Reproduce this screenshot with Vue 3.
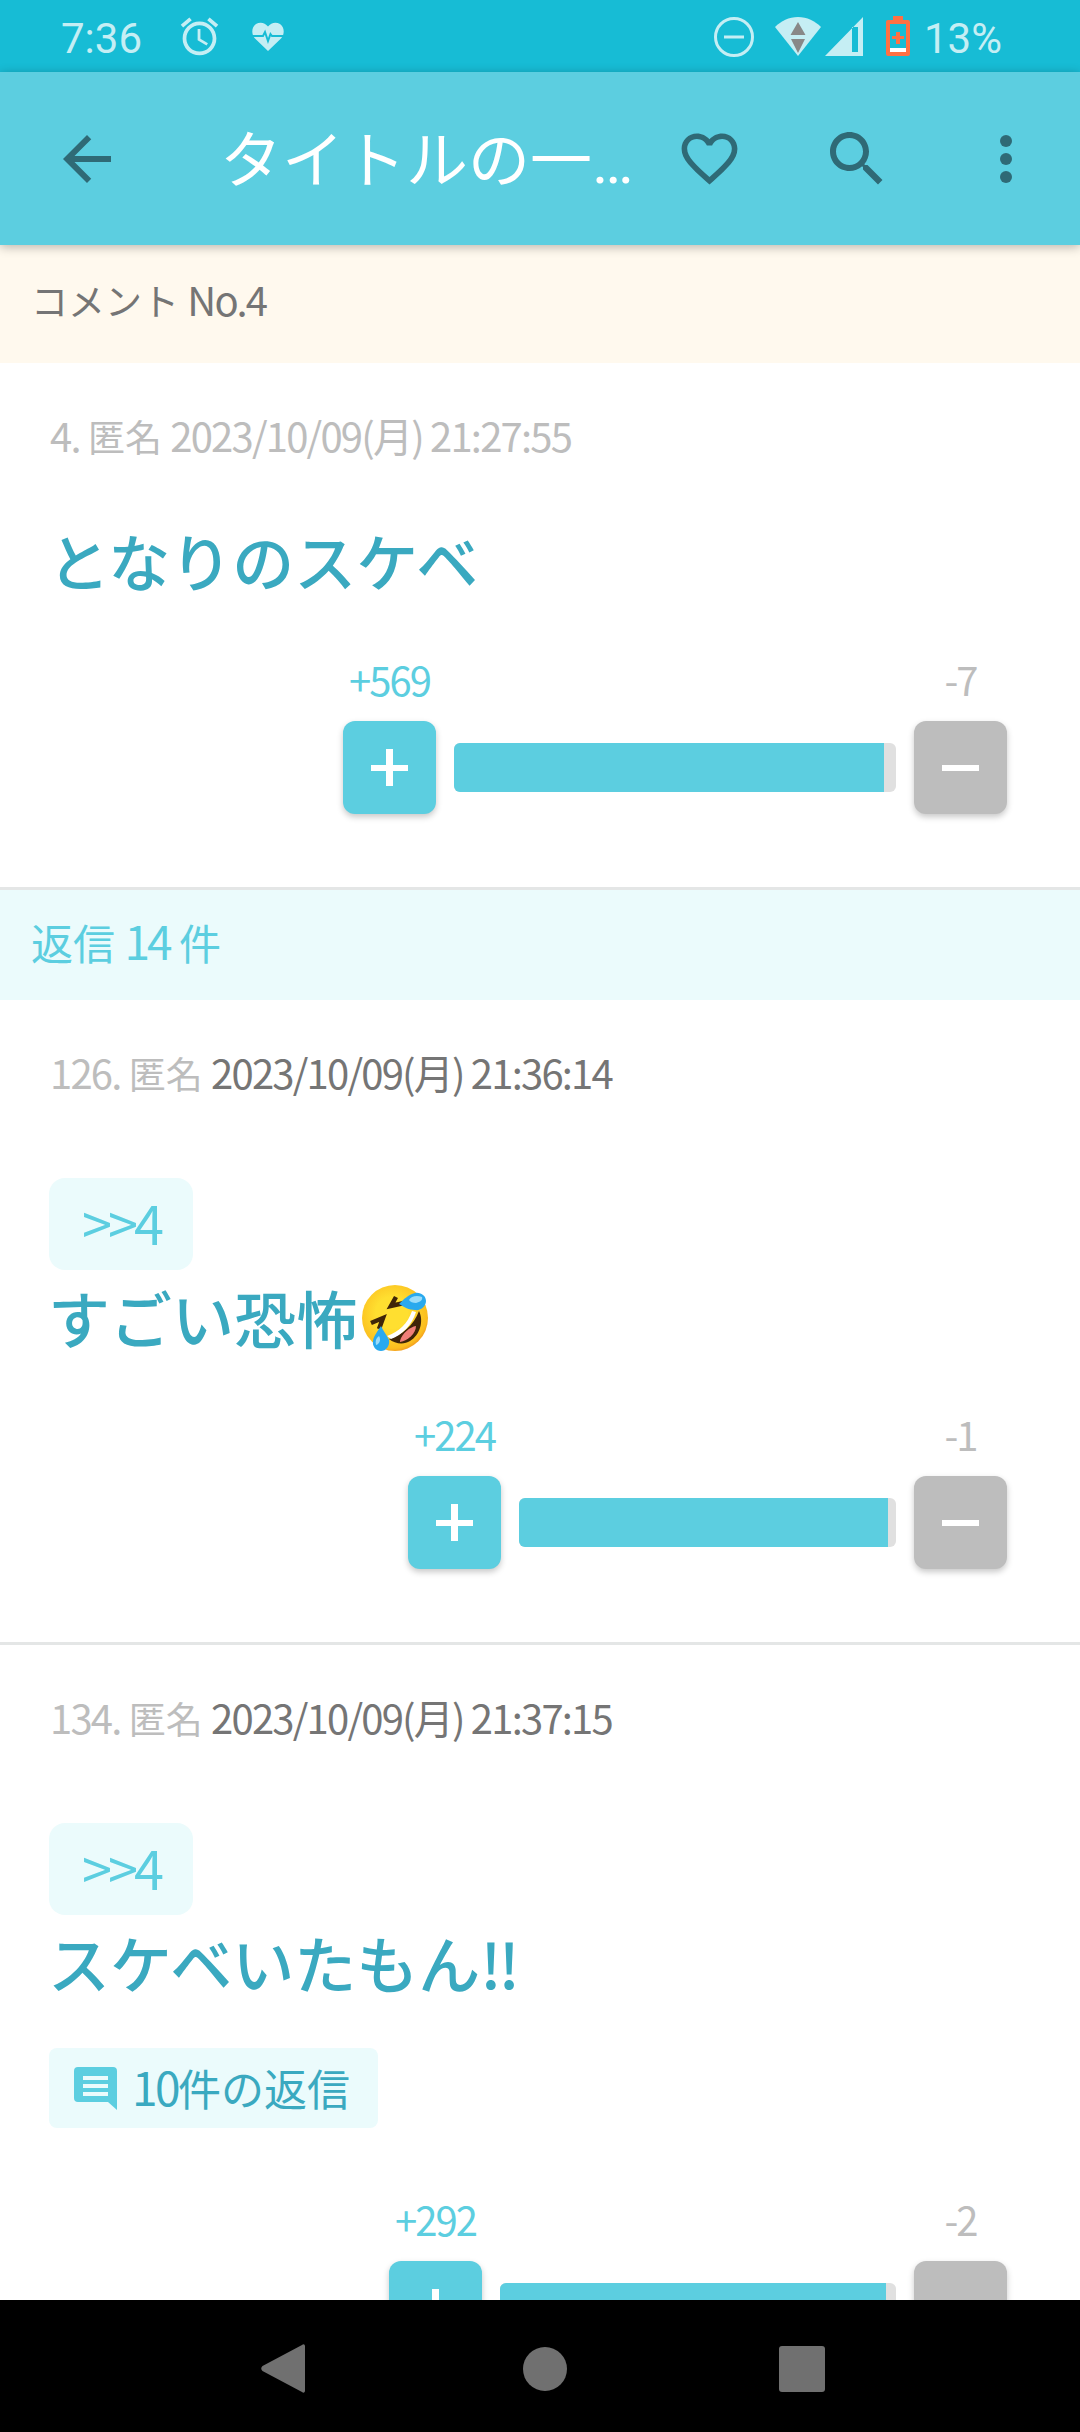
<template>
  <div class="screen">
    <div class="status">
      <span class="clock">7:36</span>
      <svg class="alarm" viewBox="0 0 24 24"><path d="M22 5.72l-4.6-3.86-1.29 1.53 4.6 3.86L22 5.72zM7.88 3.39L6.6 1.86 2 5.71l1.29 1.53 4.59-3.85zM12.5 8H11v6l4.75 2.85.75-1.23-4-2.37V8zM12 4c-4.97 0-9 4.03-9 9s4.02 9 9 9c4.97 0 9-4.03 9-9s-4.03-9-9-9zm0 16c-3.87 0-7-3.13-7-7s3.13-7 7-7 7 3.13 7 7-3.13 7-7 7z"/></svg>
      <svg class="pulse" viewBox="0 0 32 29">
        <path d="M16 29 3 16.5C-1 12-.5 5 4 2c4-2.500 9-1.500 12 2.500C19 .5 24-.5 28 2c4.500 3 5 10 1 14.500z"/>
        <path class="pulse-line" d="M0 14h11l2-4 3 9 2.500-7 1.500 2h12"/>
      </svg>
      <span class="spacer"></span>
      <svg class="dnd" viewBox="0 0 40 40"><circle cx="20" cy="20" r="18.500"/><path d="M10 20h20"/></svg>
      <svg class="wifi" viewBox="0 0 46 39">
        <path class="wifi-fan" d="M0 10C6 4 14 0 23 0s17 4 23 10L23 39z"/>
        <path class="wifi-arrow" d="M23 5l7.500 13h-15zM16 22h14l-7 14z"/>
      </svg>
      <svg class="signal" viewBox="0 0 38 39">
        <path class="signal-fill" fill-rule="evenodd" d="M38 0v39H0zM27 10v25h6V10z"/>
      </svg>
      <svg class="battery" viewBox="0 0 24 40">
        <path class="battery-shell" fill-rule="evenodd" d="M7 0h10v4h5a2 2 0 0 1 2 2v32a2 2 0 0 1-2 2H2a2 2 0 0 1-2-2V6a2 2 0 0 1 2-2h5zM4 8v28h16V8z"/>
        <rect class="battery-level" x="4" y="32" width="16" height="4"/>
        <path class="battery-shell" d="M10 16h4v4h4v3h-4v5h-4v-5H6v-3h4z"/>
      </svg>
      <span class="percent">13%</span>
    </div>

    <header class="appbar">
      <svg class="bar-icon back" viewBox="0 0 24 24"><path d="M20 11H7.830l5.590-5.590L12 4l-8 8 8 8 1.410-1.410L7.830 13H20v-2z"/></svg>
      <h1 class="page-title">タイトルの一<span class="dots">…</span></h1>
      <svg class="bar-icon heart" viewBox="0 0 24 24"><path d="M16.500 3c-1.740 0-3.410.81-4.500 2.090C10.910 3.810 9.240 3 7.500 3 4.420 3 2 5.420 2 8.500c0 3.780 3.400 6.860 8.550 11.540L12 21.350l1.450-1.320C18.600 15.360 22 12.280 22 8.500 22 5.420 19.580 3 16.500 3zm-4.400 15.550l-.1.100-.1-.1C7.140 14.240 4 11.390 4 8.500 4 6.500 5.500 5 7.500 5c1.540 0 3.040.99 3.570 2.360h1.870C13.460 5.990 14.960 5 16.500 5c2 0 3.500 1.500 3.500 3.500 0 2.890-3.140 5.740-7.900 10.050z"/></svg>
      <svg class="bar-icon search" viewBox="0 0 24 24"><path d="M15.500 14h-.79l-.28-.27C15.410 12.590 16 11.110 16 9.500 16 5.910 13.090 3 9.500 3S3 5.910 3 9.500 5.910 16 9.500 16c1.610 0 3.090-.59 4.230-1.570l.27.28v.79l5 4.990L20.490 19l-4.990-5zm-6 0C7.010 14 5 11.990 5 9.500S7.010 5 9.500 5 14 7.010 14 9.500 11.990 14 9.500 14z"/></svg>
      <svg class="bar-icon more" viewBox="0 0 24 24"><circle cx="12" cy="6" r="2"/><circle cx="12" cy="12" r="2"/><circle cx="12" cy="18" r="2"/></svg>
    </header>

    <main class="content">
      <div class="section-head comment-head">コメント <span class="num">No.4</span></div>

      <template v-for="(c, i) in comments" :key="c.no">
        <div v-if="i === 1" class="section-head reply-head">返信 <span class="num-lg">14</span> 件</div>
        <article class="item">
          <div class="meta"><span class="num">{{ c.no }}.</span> 匿名 <span class="num" :class="{ fresh: c.fresh }">{{ c.date }}</span></div>
          <div class="body">
            <div v-if="c.anchor" class="anchor">{{ c.anchor }}</div>
            <p class="text" :class="{ 'after-anchor': c.anchor }">
              {{ c.text }}<span v-if="c.bang" class="bang">{{ c.bang }}</span>
              <svg v-if="c.emoji" class="emoji" viewBox="0 0 66 66">
                <defs>
                  <radialGradient id="face" cx="0.45" cy="0.42" r="0.6">
                    <stop offset="0.4" stop-color="#ffdf30"/>
                    <stop offset="0.9" stop-color="#fbbd1f"/>
                    <stop offset="1" stop-color="#f29a1e"/>
                  </radialGradient>
                </defs>
                <circle cx="33" cy="33" r="33" fill="url(#face)"/>
                <path d="M27 54C40 50 52 40 57 26c5 10 1 24-9 30-6 4-15 3-21-2z" fill="#3f2508"/>
                <path d="M25 51C37 47 46 38 50 26l4 1C50 40 40 50 29 54z" fill="#fff"/>
                <path d="M38 56c2-8 10-14 16-15 0 7-8 15-16 16z" fill="#ef7f78"/>
                <path d="M34 12l-5 9 13-3M9 38l12-5-4 11" fill="none" stroke="#3f2508" stroke-width="4.500"/>
                <path d="M37 19c5-5 9-9 16-11 6-1 11 3 11 8s-5 10-11 9c-6 0-11-3-16-6z" fill="#29a9ee"/>
                <path d="M47 15c2-4 8-5 13-3 1 3-2 5-6 6-3 0-6-1-7-3z" fill="#9adcfa"/>
                <path d="M19 41c2 5 6 9 8 14 1 6-3 11-8 11s-9-5-8-10c1-6 5-10 8-15z" fill="#29a9ee"/>
                <path d="M14 60c-1-4 0-7 3-9 2 3 1 8-3 9z" fill="#9adcfa"/>
              </svg>
            </p>
            <div v-if="c.replies" class="replies">
              <svg class="replies-icon" viewBox="0 0 43 43"><path fill-rule="evenodd" d="M4 0h35a4 4 0 0 1 4 4v39L34 35H4a4 4 0 0 1-4-4V4a4 4 0 0 1 4-4zM9 9v4h25V9zM9 17v4h25v-4zM9 25v4h25v-4z"/></svg>
              <span><span class="reply-num">{{ c.replies }}</span>件の返信</span>
            </div>
          </div>
          <div class="votes" :class="{ 'after-replies': c.replies }">
            <div class="vote-row" :style="{ width: c.width + 'px' }">
              <div class="vote-side">
                <span class="count up">+{{ c.up }}</span>
                <div class="btn btn-up"><span class="plus"></span></div>
              </div>
              <div class="track"><div class="track-fill" :style="{ width: c.fill + 'px' }"></div></div>
              <div class="vote-side">
                <span class="count down">-{{ c.down }}</span>
                <div class="btn btn-down"><span class="minus"></span></div>
              </div>
            </div>
          </div>
        </article>
      </template>
    </main>

    <nav class="navbar">
      <svg class="nav-back" viewBox="0 0 44 49"><path d="M1.500 27a3.500 3.500 0 0 1 0-5L41 1c1.500-1.500 3-.5 3 1.500v44c0 2-1.500 3-3 1.500z"/></svg>
      <span class="nav-home"></span>
      <span class="nav-recent"></span>
    </nav>
  </div>
</template>

<script setup>
const comments = [
  { no: 4, date: '2023/10/09(月) 21:27:55', text: 'となりのスケベ', up: 569, down: 7, width: 664, fill: 430 },
  { no: 126, date: '2023/10/09(月) 21:36:14', fresh: true, anchor: '>>4', text: 'すごい恐怖', emoji: true, up: 224, down: 1, width: 599, fill: 369 },
  { no: 134, date: '2023/10/09(月) 21:37:15', fresh: true, anchor: '>>4', text: 'スケベいたもん', bang: '!!', replies: 10, up: 292, down: 2, width: 618, fill: 386 }
]
</script>

<style>
html, body {
  margin: 0;
  background: #fff;
}
</style>

<style scoped>
.screen {
  width: 1080px;
  height: 2432px;
  display: flex;
  flex-direction: column;
  overflow: hidden;
  background: #fff;
  font-family: "Noto Sans CJK JP", "Noto Sans", sans-serif;
}

/* status bar */
.status {
  height: 72px;
  flex: none;
  display: flex;
  align-items: center;
  background: #17bcd5;
  color: #c5eef4;
  font-family: Roboto, sans-serif;
  font-size: 42px;
}
.clock {
  margin-left: 61px;
  margin-top: 5px;
  width: 82px;
}
.alarm {
  width: 45px;
  height: 45px;
  margin-left: 34px;
  fill: #c5eef4;
}
.pulse {
  width: 32px;
  height: 29px;
  margin-left: 30px;
  fill: #c5eef4;
}
.pulse-line {
  fill: none;
  stroke: #17bcd5;
  stroke-width: 2;
}
.spacer {
  flex: 1;
}
.dnd {
  width: 40px;
  height: 40px;
  margin-top: 2px;
  fill: none;
  stroke: #c5eef4;
  stroke-width: 3;
}
.wifi {
  width: 46px;
  height: 39px;
  margin-left: 21px;
}
.wifi-fan {
  fill: #c5eef4;
}
.wifi-arrow {
  fill: #888;
}
.signal {
  width: 38px;
  height: 39px;
  margin-left: 4px;
}
.signal-fill {
  fill: #c5eef4;
}
.battery {
  width: 24px;
  height: 40px;
  margin-left: 23px;
}
.battery-shell {
  fill: #ff7043;
}
.battery-level {
  fill: #fff;
}
.percent {
  width: 78px;
  margin-left: 14px;
  margin-right: 78px;
  margin-top: 5px;
}

/* app bar */
.appbar {
  height: 173px;
  flex: none;
  display: flex;
  align-items: center;
  background: #5ccee0;
  box-shadow: 0 2px 10px rgba(0, 0, 0, 0.28);
  position: relative;
  z-index: 1;
}
.bar-icon {
  flex: none;
  fill: #2f6a76;
}
.back {
  width: 72px;
  height: 72px;
  margin-left: 51px;
}
.page-title {
  width: 553px;
  margin: 0 0 0 97px;
  color: #fff;
  font-size: 62px;
  font-weight: 400;
  line-height: 80px;
  white-space: nowrap;
}
.dots {
  font-family: Roboto, sans-serif;
}
.heart {
  width: 67px;
  height: 67px;
  margin-left: -97px;
}
.search {
  width: 72px;
  height: 72px;
  margin-left: 78px;
}
.more {
  width: 72px;
  height: 72px;
  margin-left: 77px;
}

/* list */
.content {
  flex: 1;
  min-height: 0;
  overflow: hidden;
}
.section-head {
  padding-left: 31px;
}
.comment-head {
  height: 118px;
  background: #fff9ee;
  color: #757575;
  font-size: 37px;
  line-height: 108px;
}
.reply-head {
  height: 110px;
  background: #ebfbfc;
  color: #5ccee0;
  font-size: 42px;
  line-height: 101px;
}
.num {
  font-size: 40px;
  letter-spacing: -1.8px;
}
.num-lg {
  font-size: 46px;
  letter-spacing: -3px;
}
.item {
  padding: 50px 0 73px;
  border-bottom: 3px solid #e4e6e6;
}
.meta {
  height: 50px;
  padding-left: 50px;
  color: #bdbdbd;
  font-size: 37px;
  line-height: 44px;
}
.fresh {
  color: #757575;
}
.body {
  display: flow-root;
  margin-top: 60px;
  padding: 0 50px 0 49px;
}
.anchor {
  width: 144px;
  height: 92px;
  box-sizing: border-box;
  margin-top: 18px;
  padding-bottom: 6px;
  display: flex;
  align-items: center;
  justify-content: center;
  border-radius: 16px;
  background: #ebfbfc;
  color: #5ccee0;
  font-size: 54px;
  letter-spacing: -4px;
}
.text {
  margin: 0 0 0 -1px;
  height: 80px;
  display: flex;
  align-items: flex-start;
  color: #3aa9c0;
  font-size: 62px;
  font-weight: 500;
  line-height: 74px;
}
.text.after-anchor {
  margin-top: 10px;
  height: 78px;
}
.bang {
  letter-spacing: -3px;
}
.emoji {
  flex: none;
  width: 66px;
  height: 66px;
  margin: 5px 0 0 4px;
}
.replies {
  width: 329px;
  height: 80px;
  box-sizing: border-box;
  margin-top: 45px;
  padding: 0 0 4px 25px;
  display: flex;
  align-items: center;
  border-radius: 8px;
  background: #ebfbfc;
  color: #3aa9c0;
  font-size: 43px;
}
.reply-num {
  font-size: 46px;
  letter-spacing: -2.500px;
}
.replies-icon {
  width: 43px;
  height: 43px;
  margin: 4px 15px 0 0;
  fill: #5ccee0;
}
.votes {
  margin-top: 57px;
  padding-right: 73px;
  display: flex;
  justify-content: flex-end;
}
.votes.after-replies {
  margin-top: 72px;
}
.vote-row {
  display: flex;
  align-items: flex-end;
  gap: 18px;
}
.vote-side {
  flex: none;
  width: 93px;
  display: flex;
  flex-direction: column;
  align-items: center;
}
.count {
  height: 44px;
  font-size: 40px;
  letter-spacing: -2px;
  line-height: 38px;
  margin-bottom: 17px;
  white-space: nowrap;
}
.up {
  color: #5ccee0;
}
.down {
  color: #bdbdbd;
}
.btn {
  width: 93px;
  height: 93px;
  display: flex;
  align-items: center;
  justify-content: center;
  border-radius: 12px;
  box-shadow: 0 3px 6px rgba(0, 0, 0, 0.22);
}
.btn-up {
  background: #5ccee0;
}
.btn-down {
  background: #bdbdbd;
}
.plus,
.minus {
  width: 37px;
  height: 6px;
  background: #fff;
  position: relative;
}
.plus::after {
  content: "";
  position: absolute;
  left: 15px;
  top: -15.500px;
  width: 7px;
  height: 37px;
  background: #fff;
}
.track {
  flex: 1;
  height: 49px;
  margin-bottom: 22px;
  border-radius: 6px;
  overflow: hidden;
  background: #e0e0e0;
}
.track-fill {
  height: 100%;
  background: #5ccee0;
}

/* nav bar */
.navbar {
  height: 132px;
  flex: none;
  position: relative;
  background: #000;
}
.nav-back,
.nav-home,
.nav-recent {
  position: absolute;
  fill: #707070;
  background: #707070;
}
.nav-back {
  left: 261px;
  top: 44px;
  width: 44px;
  height: 49px;
  background: none;
}
.nav-home {
  left: 523px;
  top: 47px;
  width: 44px;
  height: 44px;
  border-radius: 50%;
}
.nav-recent {
  left: 779px;
  top: 46px;
  width: 46px;
  height: 46px;
  border-radius: 3px;
}
</style>
